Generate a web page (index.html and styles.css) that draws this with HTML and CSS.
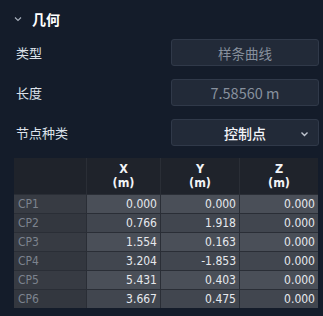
FILE: index.html
```html
<!DOCTYPE html>
<html>
<head>
<meta charset="utf-8">
<link rel="stylesheet" href="styles.css">
</head>
<body>
<div class="panel">
  <div class="section-title">
    <svg class="chev" width="8" height="6" viewBox="0 0 8 6"><path d="M1 1.5 L4 4.5 L7 1.5" fill="none" stroke="#a9b1bd" stroke-width="1.1"/></svg>
    <span>几何</span>
  </div>
  <div class="field">
    <div class="label">类型</div>
    <div class="box muted">样条曲线</div>
  </div>
  <div class="field">
    <div class="label">长度</div>
    <div class="box muted num">7.58560 m</div>
  </div>
  <div class="field last">
    <div class="label">节点种类</div>
    <div class="box select">
      <span>控制点</span>
      <svg class="sel-chev" width="9" height="6" viewBox="0 0 9 6"><path d="M1.5 1.5 L4.5 4.5 L7.5 1.5" fill="none" stroke="#c0c6d0" stroke-width="1.4"/></svg>
    </div>
  </div>
  <div class="grid">
    <div class="hd"></div>
    <div class="hd">X<br>(m)</div>
    <div class="hd">Y<br>(m)</div>
    <div class="hd">Z<br>(m)</div>

    <div class="rl odd">CP1</div><div class="v odd">0.000</div><div class="v odd">0.000</div><div class="v odd">0.000</div>
    <div class="rl">CP2</div><div class="v">0.766</div><div class="v">1.918</div><div class="v">0.000</div>
    <div class="rl odd">CP3</div><div class="v odd">1.554</div><div class="v odd">0.163</div><div class="v odd">0.000</div>
    <div class="rl">CP4</div><div class="v">3.204</div><div class="v">-1.853</div><div class="v">0.000</div>
    <div class="rl odd">CP5</div><div class="v odd">5.431</div><div class="v odd">0.403</div><div class="v odd">0.000</div>
    <div class="rl">CP6</div><div class="v">3.667</div><div class="v">0.475</div><div class="v">0.000</div>
  </div>
</div>
</body>
</html>
```
FILE: styles.css
```css
html, body {
  margin: 0;
  padding: 0;
  background: #141c2a;
}
body {
  width: 323px;
  height: 316px;
  overflow: hidden;
  font-family: "Noto Sans CJK SC", "Noto Sans", sans-serif;
}
.panel {
  padding: 6px 4px 0 14px;
  display: flex;
  flex-direction: column;
}
.section-title {
  height: 25px;
  display: flex;
  align-items: center;
  gap: 10px;
  color: #ffffff;
  font-size: 14px;
  font-weight: 700;
  margin-bottom: 8px;
}
.chev { margin-top: 1px; }
.field {
  display: flex;
  align-items: center;
  height: 27px;
  margin-bottom: 13px;
}
.field.last { margin-bottom: 12px; }
.label {
  width: 156px;
  padding-left: 2px;
  color: #dde2ea;
  font-size: 13px;
}
.box {
  box-sizing: border-box;
  width: 149px;
  height: 27px;
  background: #222a38;
  border: 1px solid #303949;
  border-radius: 3px;
  display: flex;
  align-items: center;
  justify-content: center;
  font-size: 13.5px;
}
.box.num { font-size: 14.5px; }
.muted { color: #87909d; }
.select {
  position: relative;
  color: #f2f4f8;
  font-weight: 500;
  font-size: 14px;
}
.sel-chev {
  position: absolute;
  right: 9px;
  top: 11px;
}
.grid {
  display: grid;
  grid-template-columns: 72px 73px 78px 78px;
  grid-template-rows: 36px repeat(6, 18px);
  gap: 1px;
  background: #2a2e36;
  width: 304px;
  font-family: "DejaVu Sans Condensed", "DejaVu Sans", sans-serif;
  font-stretch: condensed;
  font-size: 12px;
}
.hd {
  background: #1f232b;
  color: #f2f4f7;
  font-weight: 700;
  font-size: 12.5px;
  text-align: center;
  line-height: 14px;
  padding-top: 4px;
}
.rl {
  background: #33373f;
  color: #7c838e;
  padding-left: 4px;
  line-height: 18px;
}
.rl.odd { background: #373b43; }
.v {
  background: #41464f;
  color: #e6e9ee;
  text-align: right;
  padding-right: 3px;
  line-height: 18px;
}
.v.odd { background: #4a4f58; }
```
